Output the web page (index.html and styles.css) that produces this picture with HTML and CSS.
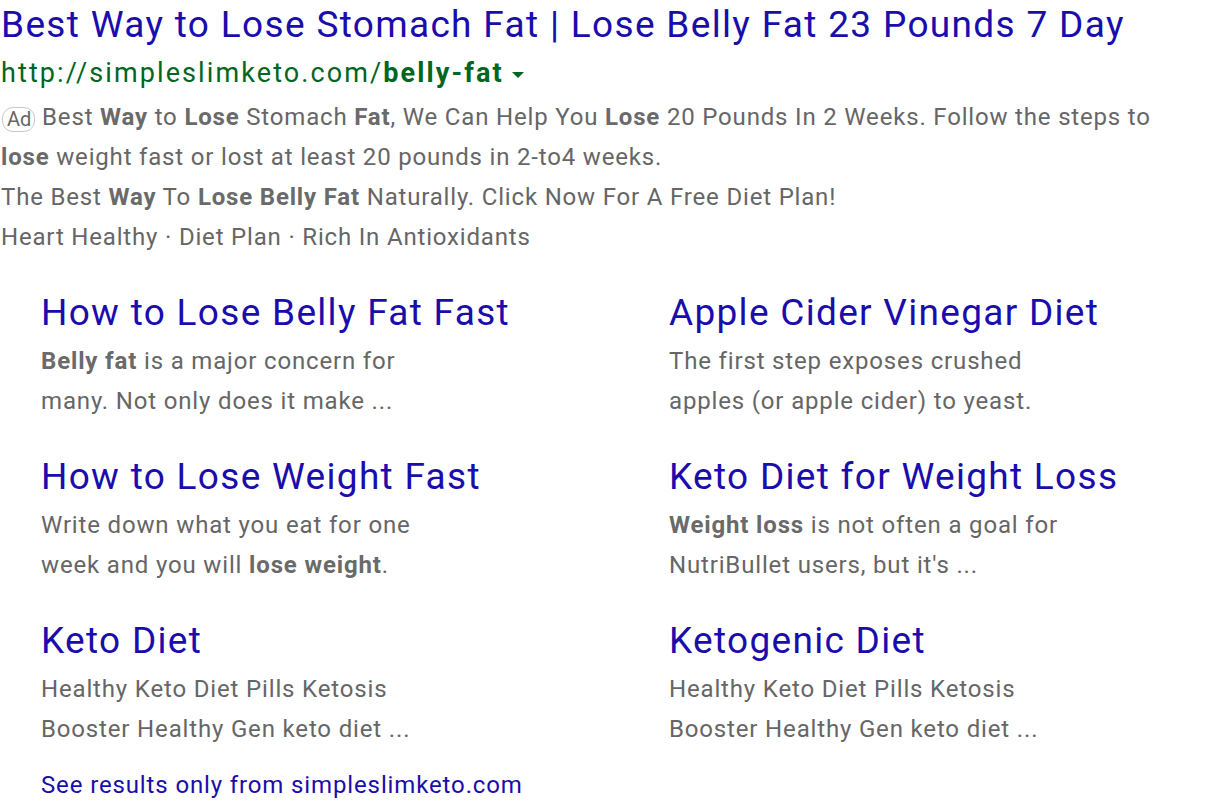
FILE: index.html
```html
<!DOCTYPE html>
<html>
<head>
<meta charset="utf-8">
<link rel="stylesheet" href="styles.css">
</head>
<body>
<div class="ad">
  <a class="title">Best Way to Lose Stomach Fat | Lose Belly Fat 23 Pounds 7 Day</a>
  <div class="url">http://simpleslimketo.com/<b>belly-fat</b><span class="caret"></span></div>
  <div class="desc">
    <p><span class="badge">Ad</span> Best <b>Way</b> to <b>Lose</b> Stomach <b>Fat</b>, We Can Help You <b>Lose</b> 20 Pounds In 2 Weeks. Follow the steps to <b>lose</b> weight fast or lost at least 20 pounds in 2-to4 weeks.</p>
    <p>The Best <b>Way</b> To <b>Lose Belly Fat</b> Naturally. Click Now For A Free Diet Plan!</p>
    <p>Heart Healthy · Diet Plan · Rich In Antioxidants</p>
  </div>
  <div class="sitelinks">
    <div class="sl">
      <a class="sl-title">How to Lose Belly Fat Fast</a>
      <div class="sl-desc"><b>Belly fat</b> is a major concern for<br>many. Not only does it make ...</div>
    </div>
    <div class="sl">
      <a class="sl-title">Apple Cider Vinegar Diet</a>
      <div class="sl-desc">The first step exposes crushed<br>apples (or apple cider) to yeast.</div>
    </div>
    <div class="sl">
      <a class="sl-title">How to Lose Weight Fast</a>
      <div class="sl-desc">Write down what you eat for one<br>week and you will <b>lose weight</b>.</div>
    </div>
    <div class="sl">
      <a class="sl-title">Keto Diet for Weight Loss</a>
      <div class="sl-desc"><b>Weight loss</b> is not often a goal for<br>NutriBullet users, but it's ...</div>
    </div>
    <div class="sl">
      <a class="sl-title">Keto Diet</a>
      <div class="sl-desc">Healthy Keto Diet Pills Ketosis<br>Booster Healthy Gen keto diet ...</div>
    </div>
    <div class="sl">
      <a class="sl-title">Ketogenic Diet</a>
      <div class="sl-desc">Healthy Keto Diet Pills Ketosis<br>Booster Healthy Gen keto diet ...</div>
    </div>
  </div>
  <a class="more">See results only from simpleslimketo.com</a>
</div>
</body>
</html>
```
FILE: styles.css
```css
html, body {
  margin: 0;
  padding: 0;
  background: #fff;
}
body {
  font-family: Roboto, "Liberation Sans", Arial, sans-serif;
  color: #666;
}
.ad {
  padding-left: 1px;
  width: 1200px;
}
.title {
  display: block;
  font-size: 37px;
  line-height: 50px;
  letter-spacing: 1.33px;
  color: #1a0dab;
  white-space: nowrap;
}
.url {
  font-size: 27px;
  line-height: 46px;
  letter-spacing: 2.1px;
  color: #006621;
  display: flex;
  align-items: center;
}
.url b {
  font-weight: 700;
}
.caret {
  display: inline-block;
  width: 0;
  height: 0;
  border-left: 6px solid transparent;
  border-right: 6px solid transparent;
  border-top: 6px solid #006621;
  margin-left: 8px;
  margin-top: 4px;
}
.desc {
  margin-top: 1px;
  font-size: 24px;
  line-height: 40px;
  letter-spacing: 0.82px;
  color: #666;
}
.desc p {
  margin: 0;
}
.desc b, .sl-desc b {
  font-weight: 700;
  color: #6a6a6a;
}
.badge {
  display: inline-block;
  box-sizing: border-box;
  height: 25px;
  border: 1px solid #c8c8c8;
  border-radius: 11px;
  font-size: 20px;
  line-height: 23px;
  letter-spacing: 0;
  padding: 0 3px 0 4px;
  margin-left: 1px;
  color: #666;
  vertical-align: -1px;
}
.sitelinks {
  display: grid;
  grid-template-columns: 628px 1fr;
  row-gap: 28px;
  margin-top: 28px;
  padding-left: 40px;
}
.sl-title {
  display: block;
  font-size: 37px;
  line-height: 56px;
  letter-spacing: 1.3px;
  color: #1a0dab;
}
.sl-desc {
  font-size: 24px;
  line-height: 40px;
  letter-spacing: 0.84px;
}
.more {
  display: block;
  margin-top: 16px;
  padding-left: 40px;
  font-size: 24px;
  line-height: 40px;
  letter-spacing: 0.87px;
  color: #1a0dab;
}
```
